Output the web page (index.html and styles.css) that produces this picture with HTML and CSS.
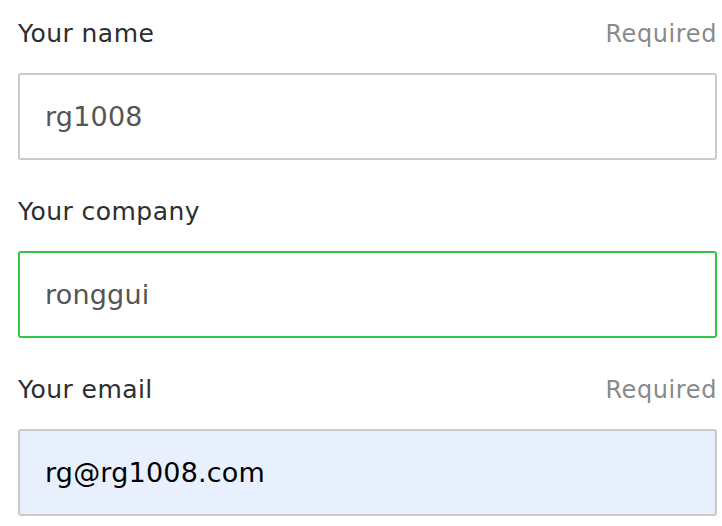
FILE: index.html
```html
<!DOCTYPE html>
<html>
<head>
<meta charset="utf-8">
<link rel="stylesheet" href="styles.css">
</head>
<body>
<form class="form">
  <div class="field">
    <div class="label-row">
      <label class="label" for="name">Your name</label>
      <span class="hint">Required</span>
    </div>
    <input class="input" id="name" type="text" value="rg1008">
  </div>
  <div class="field">
    <div class="label-row">
      <label class="label" for="company">Your company</label>
    </div>
    <input class="input input-valid" id="company" type="text" value="ronggui">
  </div>
  <div class="field">
    <div class="label-row">
      <label class="label" for="email">Your email</label>
      <span class="hint">Required</span>
    </div>
    <input class="input input-autofill" id="email" type="text" value="rg@rg1008.com">
  </div>
</form>
</body>
</html>
```

FILE: styles.css
```css
html, body {
  margin: 0;
  padding: 0;
  background: #fff;
}
body {
  font-family: "DejaVu Sans", sans-serif;
}
.form {
  width: 699px;
  padding: 17px 0 0 18px;
  display: flex;
  flex-direction: column;
  gap: 35px;
}
.field {
  display: flex;
  flex-direction: column;
}
.label-row {
  display: flex;
  justify-content: space-between;
  align-items: baseline;
  height: 30px;
  line-height: 30px;
  padding-top: 2px;
  margin-bottom: 24px;
}
.label {
  font-size: 25px;
  letter-spacing: 0.45px;
  color: #2e2e2e;
}
.hint {
  font-size: 24px;
  letter-spacing: 0.6px;
  color: #8a8a8a;
}
.input {
  box-sizing: border-box;
  width: 699px;
  height: 87px;
  margin: 0;
  padding: 0 25px;
  border: 2px solid #cacaca;
  border-radius: 3px;
  background: #fff;
  font-family: "DejaVu Sans", sans-serif;
  font-size: 27px;
  letter-spacing: 0.2px;
  color: #555;
  outline: none;
}
.input-valid {
  border-color: #33c748;
}
.input-autofill {
  background: #e8f0fe;
  color: #000;
}
```
